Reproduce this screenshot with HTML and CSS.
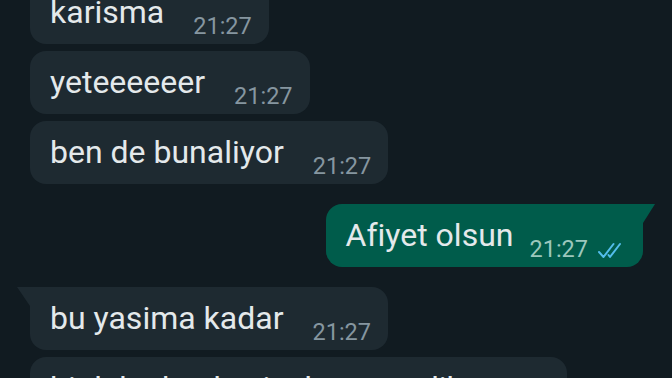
FILE: index.html
```html
<!DOCTYPE html>
<html lang="tr">
<head>
    <meta charset="UTF-8">
    <meta name="viewport" content="width=device-width, initial-scale=1.0">
    <title>Sohbet</title>
    <link rel="stylesheet" href="styles.css">
</head>
<body>
    <div class="chat">
        <div class="msg in">
            <span class="text">karisma</span>
            <span class="time">21:27</span>
        </div>
        <div class="msg in">
            <span class="text">yeteeeeeer</span>
            <span class="time">21:27</span>
        </div>
        <div class="msg in">
            <span class="text">ben de bunaliyor</span>
            <span class="time">21:27</span>
        </div>

        <div class="msg out tail">
            <span class="text">Afiyet olsun</span>
            <span class="time">21:27</span>
            <svg class="ticks" width="26" height="17" viewBox="0 0 26 17">
                <path d="M2 10 L6.5 15 L16.5 2" fill="none" stroke="#53bdeb" stroke-width="2" stroke-linecap="round" stroke-linejoin="round"/>
                <path d="M11.5 13 L13 15 L23 2" fill="none" stroke="#53bdeb" stroke-width="2" stroke-linecap="round" stroke-linejoin="round"/>
            </svg>
        </div>

        <div class="msg in tail">
            <span class="text">bu yasima kadar</span>
            <span class="time">21:27</span>
        </div>
        <div class="msg in">
            <span class="text">bi daha boyle sicak gormedik</span>
            <span class="time">21:27</span>
        </div>
    </div>
</body>
</html>
```

FILE: styles.css
```css
body {
    margin: 0;
    height: 378px;
    overflow: hidden;
    background-color: #111b21;
    font-family: Roboto, "Noto Sans", sans-serif;
    color: #e4e9eb;
}
.chat {
    display: flex;
    flex-direction: column;
    align-items: flex-start;
    gap: 7px;
    margin-top: -19px;
    padding: 0 29px 0 30px;
}
.msg {
    position: relative;
    display: flex;
    align-items: flex-end;
    height: 63px;
    box-sizing: border-box;
    padding: 11px 17px 12px 20px;
    border-radius: 16px;
    background-color: #1e2a31;
}
.msg.tail {
    margin-top: 13px;
}
.text {
    font-size: 32px;
    line-height: 40px;
    white-space: nowrap;
}
.time {
    font-size: 23.5px;
    line-height: 24px;
    margin-left: 29px;
    margin-bottom: -6px;
    color: #8696a0;
    white-space: nowrap;
}
.in.tail {
    border-top-left-radius: 0;
}
.in.tail::before {
    content: "";
    position: absolute;
    left: -13px;
    top: 0;
    width: 13px;
    height: 19px;
    background-color: #1e2a31;
    clip-path: polygon(0 0, 100% 0, 100% 100%);
}
.out {
    align-self: flex-end;
    background-color: #005c4b;
    padding-right: 20px;
}
.out .time {
    margin-left: 16px;
    color: #9cc7bd;
}
.out.tail {
    border-top-right-radius: 0;
}
.out.tail::before {
    content: "";
    position: absolute;
    right: -12px;
    top: 0;
    width: 12px;
    height: 19px;
    background-color: #005c4b;
    clip-path: polygon(0 0, 100% 0, 0 100%);
}
.ticks {
    margin-left: 9px;
    margin-bottom: -4px;
}
```
